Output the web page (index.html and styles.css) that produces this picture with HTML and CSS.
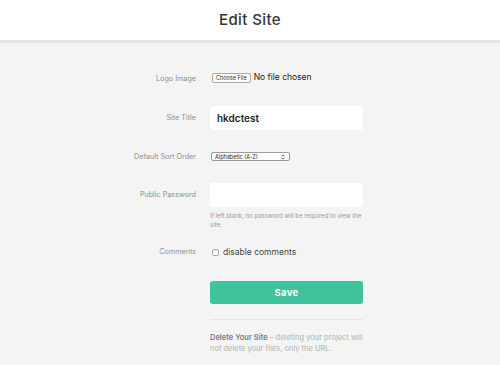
FILE: index.html
```html
<!DOCTYPE html>
<html lang="en">
<head>
    <meta charset="UTF-8">
    <meta name="viewport" content="width=device-width, initial-scale=1.0">
    <title>Edit Site</title>
    <link rel="stylesheet" href="styles.css">
</head>
<body>
    <header class="page-header">
        <h1>Edit Site</h1>
    </header>
    <form class="site-form" onsubmit="return false">
        <div class="form-row row-logo">
            <label class="field-label" for="logo">Logo Image</label>
            <div class="field">
                <input type="file" id="logo" class="file-input">
            </div>
        </div>
        <div class="form-row row-title">
            <label class="field-label" for="title">Site Title</label>
            <div class="field">
                <input type="text" id="title" class="text-input title-input" value="hkdctest">
            </div>
        </div>
        <div class="form-row row-sort">
            <label class="field-label" for="sort">Default Sort Order</label>
            <div class="field">
                <div class="select-wrap">
                    <select id="sort" class="sort-select">
                        <option>Alphabetic (A-Z)</option>
                        <option>Alphabetic (Z-A)</option>
                        <option>Newest First</option>
                    </select>
                    <svg class="select-arrows" width="4" height="6" viewBox="0 0 4 6">
                        <path d="M0.5 2.3 L2 0.8 L3.5 2.3 M0.5 3.7 L2 5.2 L3.5 3.7" fill="none" stroke="#333" stroke-width="0.8"/>
                    </svg>
                </div>
            </div>
        </div>
        <div class="form-row row-password">
            <label class="field-label" for="password">Public Password</label>
            <div class="field">
                <input type="password" id="password" class="text-input">
                <p class="help-text">If left blank, no password will be required to view the site.</p>
            </div>
        </div>
        <div class="form-row row-comments">
            <span class="field-label">Comments</span>
            <div class="field">
                <label class="check-label"><input type="checkbox" class="check-input"> disable comments</label>
            </div>
        </div>
        <div class="form-row row-save">
            <span class="field-label"></span>
            <div class="field">
                <button type="submit" class="save-btn">Save</button>
                <hr class="divider">
                <p class="delete-text"><strong>Delete Your Site</strong> &ndash; deleting your project will not delete your files, only the URL.</p>
            </div>
        </div>
    </form>
</body>
</html>
```

FILE: styles.css
```css
body {
    margin: 0;
    font-family: Inter, "DejaVu Sans", sans-serif;
    background-color: #f4f4f4;
    color: #333;
}

.page-header {
    height: 40px;
    background-color: #fff;
    border-bottom: 3px solid #e6e6e6;
    display: flex;
    align-items: center;
    justify-content: center;
}

    .page-header h1 {
        margin: 0 0 2px 0;
        font-size: 15px;
        font-weight: 500;
        color: #333;
        letter-spacing: 0.4px;
    }

.site-form {
    padding-top: 29px;
}

.form-row {
    display: grid;
    grid-template-columns: 196px 153px;
    column-gap: 14px;
    align-items: start;
}

.field-label {
    text-align: right;
    font-size: 7.2px;
    color: #8e8e8e;
}

.field {
    display: flex;
    flex-direction: column;
}

/* logo */
.row-logo .field-label {
    line-height: 13px;
}

.file-input {
    font-family: inherit;
    font-size: 8.5px;
    color: #222;
    height: 13px;
}

    .file-input::file-selector-button {
        font-family: inherit;
        font-size: 5.5px;
        padding: 1px 3px;
        margin: 0 3px 0 2px;
        background-color: #fafafa;
        border: 1px solid #aaa;
        border-radius: 2px;
        color: #333;
    }

/* text inputs */
.row-title {
    margin-top: 21px;
}

    .row-title .field-label,
    .row-password .field-label {
        line-height: 24px;
    }

.text-input {
    box-sizing: border-box;
    width: 100%;
    height: 24px;
    border: none;
    border-radius: 3px;
    background-color: #fff;
    padding: 0 7px;
    font-family: inherit;
    outline: none;
}

.title-input {
    font-size: 10px;
    font-weight: 600;
    color: #1e1e1e;
}

/* sort */
.row-sort {
    margin-top: 22px;
}

    .row-sort .field-label {
        line-height: 10px;
    }

.select-wrap {
    position: relative;
    width: 79px;
    margin-left: 1px;
}

.sort-select {
    -webkit-appearance: none;
    appearance: none;
    box-sizing: border-box;
    width: 79px;
    height: 9px;
    padding: 0 0 0 3px;
    font-family: inherit;
    font-size: 5.5px;
    color: #222;
    background-color: #fff;
    border: 1px solid #9c9c9c;
    border-radius: 2px;
    display: block;
}

.select-arrows {
    position: absolute;
    right: 5px;
    top: 1.5px;
}

/* password */
.row-password {
    margin-top: 21px;
}

.help-text {
    margin: 4px 0 0;
    font-size: 6.1px;
    line-height: 9px;
    color: #9a9a9a;
}

/* comments */
.row-comments {
    margin-top: 17px;
}

    .row-comments .field-label {
        line-height: 12px;
    }

.check-label {
    display: flex;
    align-items: center;
    font-size: 8.5px;
    line-height: 12px;
    color: #444;
    padding-left: 2px;
}

.check-input {
    -webkit-appearance: none;
    appearance: none;
    width: 7px;
    height: 7px;
    margin: 0 4px 0 0;
    border: 1px solid #aaa;
    border-radius: 2px;
    background-color: #fff;
}

/* save + delete */
.row-save {
    margin-top: 23px;
}

.save-btn {
    height: 23px;
    border: none;
    border-radius: 3px;
    background-color: #40c29c;
    color: #fff;
    font-family: inherit;
    font-size: 9.5px;
    font-weight: 700;
    letter-spacing: 0.3px;
    cursor: pointer;
}

.divider {
    width: 100%;
    margin: 15px 0 0;
    border: none;
    border-top: 1px solid #e6e6e6;
}

.delete-text {
    margin: 12px 0 0;
    font-size: 7.5px;
    line-height: 11px;
    color: #b3b3b3;
}

    .delete-text strong {
        color: #7a7a7a;
        font-weight: 600;
    }
```
